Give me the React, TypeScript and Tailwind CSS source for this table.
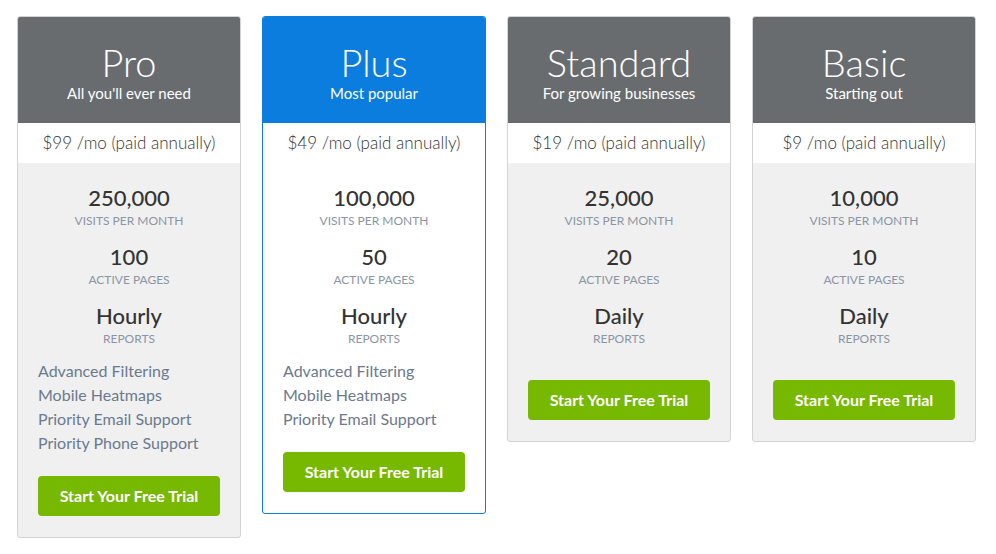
import React from "react";

type Plan = {
  name: string;
  tagline: string;
  price: string;
  visits: string;
  pages: string;
  reports: string;
  features: string[];
  featured?: boolean;
};

const plans: Plan[] = [
  {
    name: "Pro",
    tagline: "All you'll ever need",
    price: "$99",
    visits: "250,000",
    pages: "100",
    reports: "Hourly",
    features: ["Advanced Filtering", "Mobile Heatmaps", "Priority Email Support", "Priority Phone Support"],
  },
  {
    name: "Plus",
    tagline: "Most popular",
    price: "$49",
    visits: "100,000",
    pages: "50",
    reports: "Hourly",
    features: ["Advanced Filtering", "Mobile Heatmaps", "Priority Email Support"],
    featured: true,
  },
  {
    name: "Standard",
    tagline: "For growing businesses",
    price: "$19",
    visits: "25,000",
    pages: "20",
    reports: "Daily",
    features: [],
  },
  {
    name: "Basic",
    tagline: "Starting out",
    price: "$9",
    visits: "10,000",
    pages: "10",
    reports: "Daily",
    features: [],
  },
];

function Stat({ value, label, first }: { value: string; label: string; first?: boolean }) {
  return (
    <div className={first ? "text-center" : "text-center mt-[15px]"}>
      <div className="text-[22px] leading-[24px] font-medium text-[#333]">{value}</div>
      <div className="mt-[2px] text-[12px] leading-[18px] uppercase text-[#8a95a5]">{label}</div>
    </div>
  );
}

function PlanCard({ plan }: { plan: Plan }) {
  return (
    <div
      className={
        plan.featured
          ? "w-[224px] rounded-[3px] border border-[#0b7fdd] bg-white overflow-hidden"
          : "w-[224px] rounded-[3px] border border-[#d3d3d3] bg-[#f0f0f0] overflow-hidden"
      }
    >
      <div
        className={
          plan.featured
            ? "bg-[#0a7ddf] text-white text-center pt-[25px] pb-[21px]"
            : "bg-[#686c6f] text-white text-center pt-[25px] pb-[21px]"
        }
      >
        <div className="text-[38px] leading-[40px] font-light">{plan.name}</div>
        <div className="mt-[2px] text-[15px] leading-[18px]">{plan.tagline}</div>
      </div>
      <div className="bg-white text-center text-[17px] leading-[40px] font-light text-[#333]">
        {plan.price} /mo (paid annually)
      </div>
      <div className="flex flex-col px-[20px] pt-[23px] pb-[21px]">
        <Stat value={plan.visits} label="Visits per month" first />
        <Stat value={plan.pages} label="Active pages" />
        <Stat value={plan.reports} label="Reports" />
        <ul className="pt-[11px] pb-[21px]">
          {plan.features.map((f) => (
            <li key={f} className="text-[16px] leading-[24px] text-[#6b7a8e]">
              {f}
            </li>
          ))}
        </ul>
        <button className="w-full h-[40px] rounded-[4px] bg-[#77b800] text-white text-[16px] font-bold">
          Start Your Free Trial
        </button>
      </div>
    </div>
  );
}

export default function App() {
  return (
    <div
      className="w-[996px] h-[554px] bg-white flex items-start gap-[21px] pl-[17px] pt-4"
      style={{ fontFamily: "Lato, 'Open Sans', sans-serif" }}
    >
      {plans.map((p) => (
        <PlanCard key={p.name} plan={p} />
      ))}
    </div>
  );
}
